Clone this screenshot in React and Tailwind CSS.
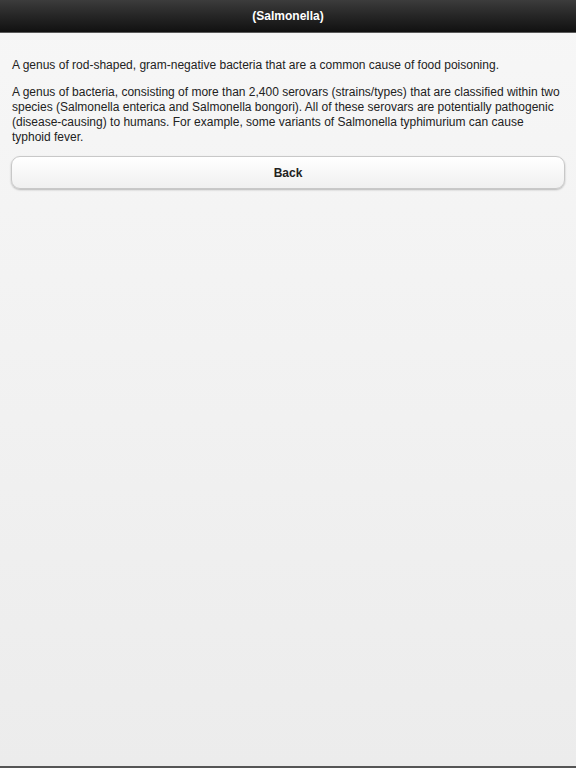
export default function App() {
  return (
    <div className="flex h-[768px] w-[576px] flex-col bg-gradient-to-b from-[#f7f7f7] to-[#ececec] font-['Liberation_Sans',Arial,sans-serif] text-[#222]">
      <header className="flex h-[33px] shrink-0 items-center justify-center border-b border-[#5a5a5a] bg-gradient-to-b from-[#3c3c3c] to-[#111] text-[12px] font-bold text-white">
        (Salmonella)
      </header>
      <main className="flex flex-1 flex-col px-[12px] pt-[25px]">
        <p className="text-[12px] leading-[15px]">
          A genus of rod-shaped, gram-negative bacteria that are a common cause of food poisoning.
        </p>
        <p className="mt-[12px] text-[12px] leading-[15px]">
          A genus of bacteria, consisting of more than 2,400 serovars (strains/types) that are classified within two species (Salmonella enterica and Salmonella bongori). All of these serovars are potentially pathogenic (disease-causing) to humans. For example, some variants of Salmonella typhimurium can cause typhoid fever.
        </p>
        <button className="mx-[-1px] mt-[11px] flex h-[33px] items-center justify-center rounded-[9px] border border-[#c8c8c8] bg-gradient-to-b from-white to-[#f0f0f0] text-[12px] font-bold text-[#222] shadow-[0_1px_2px_rgba(0,0,0,0.25)]">
          Back
        </button>
      </main>
      <div className="h-[2px] shrink-0 bg-[#555]" />
    </div>
  );
}
